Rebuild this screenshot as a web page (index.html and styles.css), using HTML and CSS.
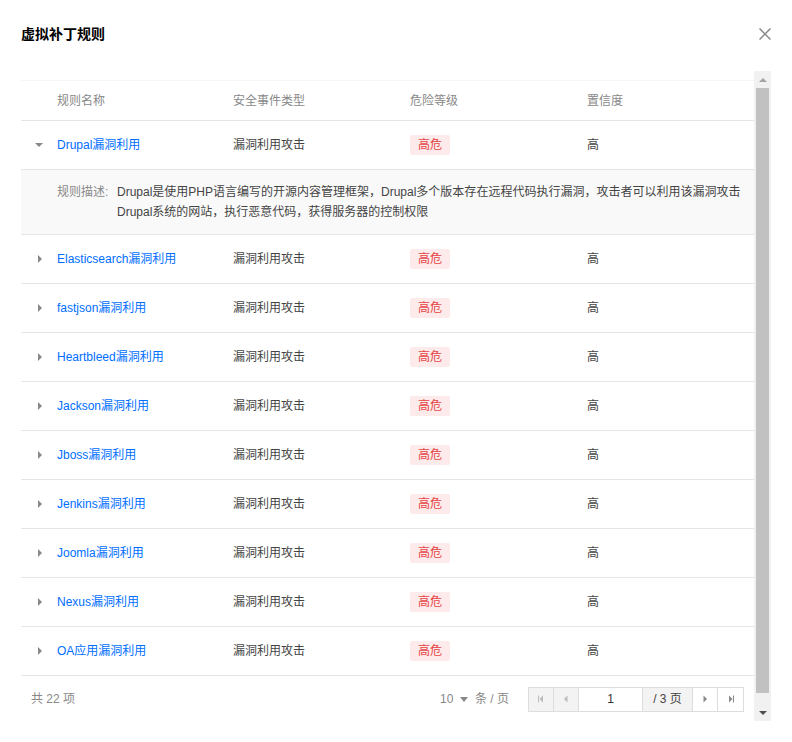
FILE: index.html
```html
<!DOCTYPE html>
<html lang="zh-CN">
<head>
<meta charset="utf-8">
<title>虚拟补丁规则</title>
<link rel="stylesheet" href="styles.css">
</head>
<body>
<div class="dialog">
  <div class="dialog-head">
    <h2 class="dialog-title">虚拟补丁规则</h2>
    <svg class="close" width="12" height="12" viewBox="0 0 12 12"><path d="M0.5 0.5L11.5 11.5M11.5 0.5L0.5 11.5" stroke="#888" stroke-width="1.5" fill="none"/></svg>
  </div>
  <div class="scroll-wrap">
    <div class="content">
      <div class="table">
        <div class="row head">
          <div class="cell"></div>
          <div class="cell">规则名称</div>
          <div class="cell">安全事件类型</div>
          <div class="cell">危险等级</div>
          <div class="cell">置信度</div>
        </div>
        <div class="row">
          <div class="cell arrow"><span class="tri-down"></span></div>
          <div class="cell link">Drupal漏洞利用</div>
          <div class="cell">漏洞利用攻击</div>
          <div class="cell"><span class="tag">高危</span></div>
          <div class="cell">高</div>
        </div>
        <div class="detail">
          <span class="detail-label">规则描述:</span>
          <span class="detail-text">Drupal是使用PHP语言编写的开源内容管理框架，Drupal多个版本存在远程代码执行漏洞，攻击者可以利用该漏洞攻击Drupal系统的网站，执行恶意代码，获得服务器的控制权限</span>
        </div>
        <div class="row">
          <div class="cell arrow"><span class="tri-right"></span></div>
          <div class="cell link">Elasticsearch漏洞利用</div>
          <div class="cell">漏洞利用攻击</div>
          <div class="cell"><span class="tag">高危</span></div>
          <div class="cell">高</div>
        </div>
        <div class="row">
          <div class="cell arrow"><span class="tri-right"></span></div>
          <div class="cell link">fastjson漏洞利用</div>
          <div class="cell">漏洞利用攻击</div>
          <div class="cell"><span class="tag">高危</span></div>
          <div class="cell">高</div>
        </div>
        <div class="row">
          <div class="cell arrow"><span class="tri-right"></span></div>
          <div class="cell link">Heartbleed漏洞利用</div>
          <div class="cell">漏洞利用攻击</div>
          <div class="cell"><span class="tag">高危</span></div>
          <div class="cell">高</div>
        </div>
        <div class="row">
          <div class="cell arrow"><span class="tri-right"></span></div>
          <div class="cell link">Jackson漏洞利用</div>
          <div class="cell">漏洞利用攻击</div>
          <div class="cell"><span class="tag">高危</span></div>
          <div class="cell">高</div>
        </div>
        <div class="row">
          <div class="cell arrow"><span class="tri-right"></span></div>
          <div class="cell link">Jboss漏洞利用</div>
          <div class="cell">漏洞利用攻击</div>
          <div class="cell"><span class="tag">高危</span></div>
          <div class="cell">高</div>
        </div>
        <div class="row">
          <div class="cell arrow"><span class="tri-right"></span></div>
          <div class="cell link">Jenkins漏洞利用</div>
          <div class="cell">漏洞利用攻击</div>
          <div class="cell"><span class="tag">高危</span></div>
          <div class="cell">高</div>
        </div>
        <div class="row">
          <div class="cell arrow"><span class="tri-right"></span></div>
          <div class="cell link">Joomla漏洞利用</div>
          <div class="cell">漏洞利用攻击</div>
          <div class="cell"><span class="tag">高危</span></div>
          <div class="cell">高</div>
        </div>
        <div class="row">
          <div class="cell arrow"><span class="tri-right"></span></div>
          <div class="cell link">Nexus漏洞利用</div>
          <div class="cell">漏洞利用攻击</div>
          <div class="cell"><span class="tag">高危</span></div>
          <div class="cell">高</div>
        </div>
        <div class="row">
          <div class="cell arrow"><span class="tri-right"></span></div>
          <div class="cell link">OA应用漏洞利用</div>
          <div class="cell">漏洞利用攻击</div>
          <div class="cell"><span class="tag">高危</span></div>
          <div class="cell">高</div>
        </div>
      </div>
      <div class="footer">
        <span class="total">共 22 项</span>
        <div class="pager">
          <span class="page-size">10 <span class="caret"></span> 条 / 页</span>
          <div class="pager-box">
            <span class="pbtn disabled"><svg width="8" height="8" viewBox="0 0 8 8"><rect x="1" y="0.5" width="1" height="7" fill="#bbb"/><path d="M6 0.5L2.5 4L6 7.5Z" fill="#bbb"/></svg></span>
            <span class="pbtn disabled"><svg width="8" height="8" viewBox="0 0 8 8"><path d="M5.5 0.5L2 4L5.5 7.5Z" fill="#bbb"/></svg></span>
            <span class="pinput">1</span>
            <span class="ptotal">/ 3 页</span>
            <span class="pbtn"><svg width="8" height="8" viewBox="0 0 8 8"><path d="M2.5 0.5L6 4L2.5 7.5Z" fill="#888"/></svg></span>
            <span class="pbtn"><svg width="8" height="8" viewBox="0 0 8 8"><path d="M2 0.5L5.5 4L2 7.5Z" fill="#888"/><rect x="6" y="0.5" width="1" height="7" fill="#888"/></svg></span>
          </div>
        </div>
      </div>
    </div>
    <div class="scrollbar">
      <div class="sb-btn"><span class="sb-up"></span></div>
      <div class="sb-track"><div class="sb-thumb"></div></div>
      <div class="sb-btn"><span class="sb-down"></span></div>
    </div>
  </div>
</div>
</body>
</html>
```

FILE: styles.css
```css
* { box-sizing: border-box; }
html, body { margin: 0; padding: 0; background: #fff; }
body {
  font-family: "Liberation Sans", "Noto Sans CJK SC", sans-serif;
  font-size: 12px;
  color: #444;
  line-height: 20px;
}
.dialog {
  width: 792px;
  height: 742px;
  padding: 0 21px;
}
.dialog-head {
  display: flex;
  justify-content: space-between;
  align-items: center;
  padding-top: 24px;
  height: 71px;
  padding-bottom: 27px;
}
.dialog-title {
  margin: 0;
  font-size: 14px;
  font-weight: bold;
  color: #000;
  line-height: 20px;
}
.close { display: block; margin-right: 0; }
.scroll-wrap {
  display: flex;
  height: 650px;
}
.content {
  width: 733px;
  overflow: hidden;
  padding-top: 9px;
}
.table { border-top: 1px solid #f6f6f6; }
.row {
  display: grid;
  grid-template-columns: 36px 176px 177px 177px 167px;
  height: 49px;
  border-bottom: 1px solid #e5e5e5;
  align-items: center;
}
.row.head { height: 40px; color: #888; }
.cell { white-space: nowrap; }
.link { color: #006eff; }
.arrow { display: flex; justify-content: center; align-items: center; }
.tri-right {
  width: 0; height: 0;
  border-top: 4px solid transparent;
  border-bottom: 4px solid transparent;
  border-left: 4px solid #888;
  margin-left: 1px;
}
.tri-down {
  width: 0; height: 0;
  border-left: 4px solid transparent;
  border-right: 4px solid transparent;
  border-top: 4px solid #888;
}
.tag {
  display: inline-block;
  width: 40px;
  height: 20px;
  line-height: 20px;
  text-align: center;
  background: #fdeaea;
  color: #e54545;
  border-radius: 2px;
}
.detail {
  display: flex;
  background: #f9f9f9;
  padding: 12px 8px 12px 36px;
  border-bottom: 1px solid #e5e5e5;
  color: #444;
}
.detail-label { color: #888; flex: none; width: 60px; }
.detail-text { flex: 1; }
.footer {
  display: flex;
  justify-content: space-between;
  align-items: center;
  padding: 10px 10px 0 10px;
  height: 36px;
}
.total { color: #888; }
.pager { display: flex; align-items: center; }
.page-size { color: #888; margin-right: 19px; display: flex; align-items: center; white-space: pre; }
.caret {
  display: inline-block;
  width: 0; height: 0;
  border-left: 4px solid transparent;
  border-right: 4px solid transparent;
  border-top: 5px solid #888;
  margin: 0 4px 0 3px;
}
.pager-box {
  display: flex;
  height: 25px;
  border: 1px solid #ddd;
}
.pager-box > span {
  display: flex;
  align-items: center;
  justify-content: center;
  height: 23px;
  border-right: 1px solid #ddd;
}
.pager-box > span:last-child { border-right: none; }
.pbtn { width: 25px; background: #fff; }
.pbtn.disabled { background: #f3f3f3; }
.pbtn svg { display: block; }
.pinput { width: 64px; color: #333; }
.ptotal { width: 50px; background: #f3f3f3; color: #444; }
.scrollbar {
  width: 17px;
  height: 650px;
  background: #f1f1f1;
  display: flex;
  flex-direction: column;
}
.sb-btn {
  height: 17px;
  display: flex;
  align-items: center;
  justify-content: center;
}
.sb-up {
  width: 0; height: 0;
  border-left: 4px solid transparent;
  border-right: 4px solid transparent;
  border-bottom: 4px solid #a3a3a3;
}
.sb-down {
  width: 0; height: 0;
  border-left: 4px solid transparent;
  border-right: 4px solid transparent;
  border-top: 4px solid #505050;
}
.sb-track { flex: 1; padding: 0 2px; }
.sb-thumb { height: 605px; background: #c1c1c1; }
```
